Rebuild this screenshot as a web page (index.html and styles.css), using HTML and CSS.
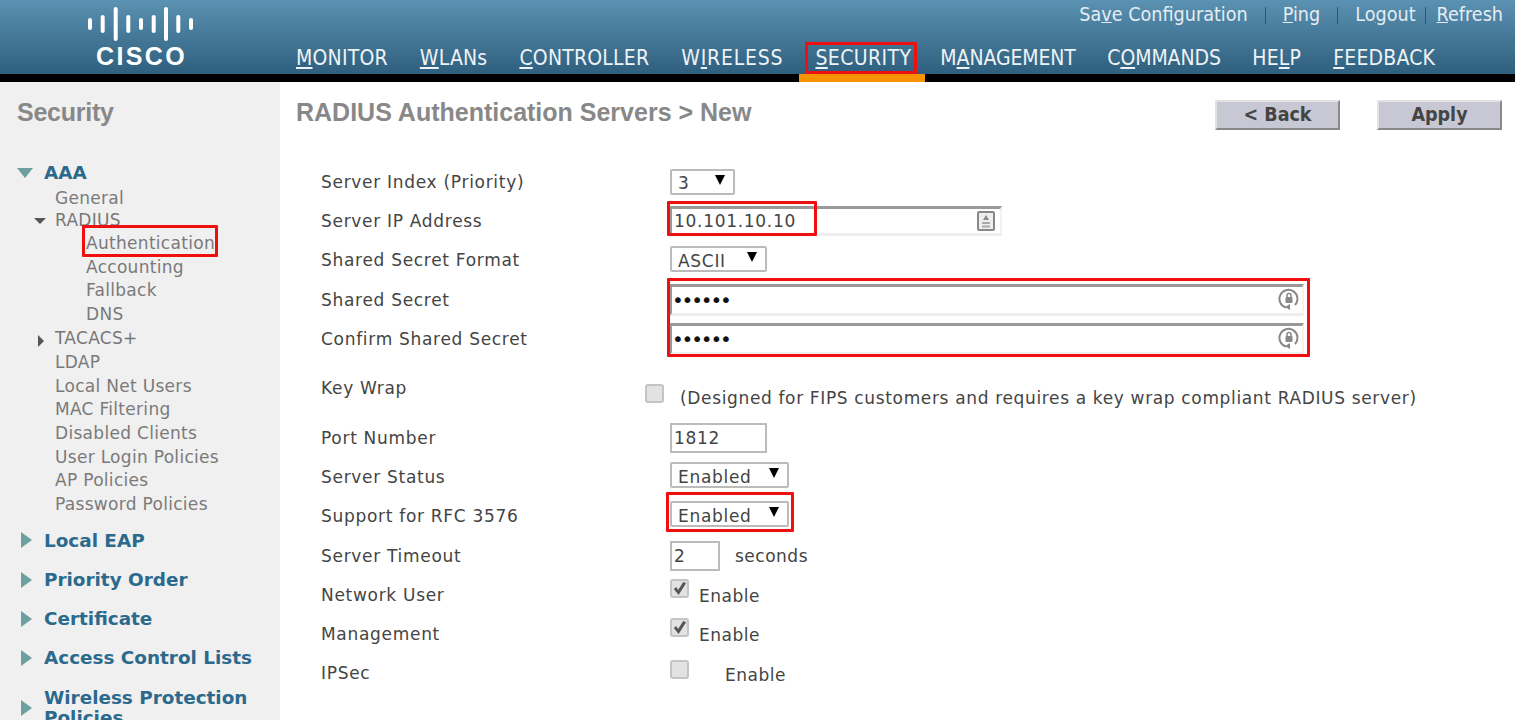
FILE: index.html
```html
<!DOCTYPE html>
<html lang="en">
<head>
    <meta charset="UTF-8">
    <title>RADIUS Authentication Servers &gt; New</title>
    <link rel="stylesheet" href="styles.css">
</head>
<body>
    <header class="topbar">
        <div class="logo">
            <svg class="logo-bars" width="110" height="34" viewBox="0 0 110 34">
                <g stroke="#fff" stroke-width="4" stroke-linecap="round">
                    <line x1="6" y1="13" x2="6" y2="21"/>
                    <line x1="18.7" y1="10" x2="18.7" y2="24"/>
                    <line x1="31.7" y1="2" x2="31.7" y2="32"/>
                    <line x1="44.3" y1="10" x2="44.3" y2="24"/>
                    <line x1="57" y1="13" x2="57" y2="21"/>
                    <line x1="69.7" y1="10" x2="69.7" y2="24"/>
                    <line x1="82" y1="2" x2="82" y2="32"/>
                    <line x1="94.3" y1="10" x2="94.3" y2="24"/>
                    <line x1="107" y1="13" x2="107" y2="21"/>
                </g>
            </svg>
            <div class="logo-text">CISCO</div>
        </div>
        <div class="topbar-right">
            <div class="toplinks">
                <a>Sa<u>v</u>e Configuration</a><i></i>
                <a><u>P</u>ing</a><i></i>
                <a>Lo<u>g</u>out</a><i class="tight"></i>
                <a><u>R</u>efresh</a>
            </div>
            <nav class="nav">
                <a><u>M</u>ONITOR</a>
                <a><u>W</u>LANs</a>
                <a><u>C</u>ONTROLLER</a>
                <a class="wide">W<u>I</u>RELESS</a>
                <a class="active"><u>S</u>ECURITY<span class="mark mark-nav"></span></a>
                <a class="narrow">M<u>A</u>NAGEMENT</a>
                <a class="narrow">C<u>O</u>MMANDS</a>
                <a>HE<u>L</u>P</a>
                <a><u>F</u>EEDBACK</a>
            </nav>
        </div>
    </header>
    <div class="strip"><span class="strip-tab"></span></div>

    <div class="layout">
        <aside class="side">
            <h2 class="side-title">Security</h2>
            <div class="group open">
                <svg class="tri" width="16" height="10" viewBox="0 0 16 10"><path d="M0 0h16L8 10z" fill="#6c9fa0"/></svg>AAA
            </div>
            <ul class="sub">
                <li class="first">General</li>
                <li class="dark"><svg class="tri-sm" width="14" height="8" viewBox="0 0 14 8"><path d="M1 1h12L7 7z" fill="#555"/></svg>RADIUS</li>
                <li class="sub2 auth">Authentication<span class="mark mark-auth"></span></li>
                <li class="sub2">Accounting</li>
                <li class="sub2">Fallback</li>
                <li class="sub2">DNS</li>
                <li class="dark tacacs"><svg class="tri-sm" width="14" height="12" viewBox="0 0 14 12"><path d="M5 0l6 6-6 6z" fill="#555"/></svg>TACACS+</li>
                <li>LDAP</li>
                <li>Local Net Users</li>
                <li>MAC Filtering</li>
                <li>Disabled Clients</li>
                <li>User Login Policies</li>
                <li>AP Policies</li>
                <li>Password Policies</li>
            </ul>
            <div class="group"><svg class="tri" width="11" height="16" viewBox="0 0 11 16"><path d="M0 0l11 8-11 8z" fill="#6c9fa0"/></svg>Local EAP</div>
            <div class="group"><svg class="tri" width="11" height="16" viewBox="0 0 11 16"><path d="M0 0l11 8-11 8z" fill="#6c9fa0"/></svg>Priority Order</div>
            <div class="group"><svg class="tri" width="11" height="16" viewBox="0 0 11 16"><path d="M0 0l11 8-11 8z" fill="#6c9fa0"/></svg>Certificate</div>
            <div class="group"><svg class="tri" width="11" height="16" viewBox="0 0 11 16"><path d="M0 0l11 8-11 8z" fill="#6c9fa0"/></svg>Access Control Lists</div>
            <div class="group group-wrap"><svg class="tri" width="11" height="16" viewBox="0 0 11 16"><path d="M0 0l11 8-11 8z" fill="#6c9fa0"/></svg><span>Wireless Protection Policies</span></div>
        </aside>

        <main class="content">
            <div class="title-row">
                <h1 class="title">RADIUS Authentication Servers &gt; New</h1>
                <div class="buttons">
                    <button class="btn">&lt; Back</button>
                    <button class="btn">Apply</button>
                </div>
            </div>

            <div class="form">
                <div class="row">
                    <label>Server Index (Priority)</label>
                    <div class="ctl"><div class="select w-index"><span>3</span><svg width="12" height="10" viewBox="0 0 12 10"><path d="M1 0h10L6 10z"/></svg></div></div>
                </div>
                <div class="row">
                    <label>Server IP Address</label>
                    <div class="ctl">
                        <span class="mark mark-ip"></span>
                        <div class="field w-ip">
                            <input type="text" value="10.101.10.10">
                            <svg class="field-icon" width="18" height="20" viewBox="0 0 18 20">
                                <rect x="1" y="1" width="16" height="18" rx="1" fill="#eee" stroke="#888" stroke-width="2"/>
                                <path d="M9 4l3 5H6z" fill="#888"/>
                                <path d="M5 11h8v2H5zM5 14.500h8v2H5z" fill="#aaa"/>
                            </svg>
                        </div>
                    </div>
                </div>
                <div class="row">
                    <label>Shared Secret Format</label>
                    <div class="ctl"><div class="select w-ascii"><span>ASCII</span><svg width="12" height="10" viewBox="0 0 12 10"><path d="M1 0h10L6 10z"/></svg></div></div>
                </div>
                <div class="row">
                    <label>Shared Secret</label>
                    <div class="ctl">
                        <span class="mark mark-secret"></span>
                        <div class="field w-secret">
                            <input class="pw" type="password" value="secret">
                            <svg class="field-icon lock" width="22" height="24" viewBox="0 0 22 24">
                                <path d="M8 20.500A9 9 0 1 1 17 18" fill="none" stroke="#888" stroke-width="2"/>
                                <path d="M12 17v6l-5-3z" fill="#888"/>
                                <rect x="7.500" y="10" width="7" height="6" rx="1" fill="#888"/>
                                <path d="M9 10V8.500a2 2 0 0 1 4 0V10" fill="none" stroke="#888" stroke-width="1.500"/>
                            </svg>
                        </div>
                    </div>
                </div>
                <div class="row">
                    <label>Confirm Shared Secret</label>
                    <div class="ctl">
                        <div class="field w-secret">
                            <input class="pw" type="password" value="secret">
                            <svg class="field-icon lock" width="22" height="24" viewBox="0 0 22 24">
                                <path d="M8 20.500A9 9 0 1 1 17 18" fill="none" stroke="#888" stroke-width="2"/>
                                <path d="M12 17v6l-5-3z" fill="#888"/>
                                <rect x="7.500" y="10" width="7" height="6" rx="1" fill="#888"/>
                                <path d="M9 10V8.500a2 2 0 0 1 4 0V10" fill="none" stroke="#888" stroke-width="1.500"/>
                            </svg>
                        </div>
                    </div>
                </div>
                <div class="row row-wrap">
                    <label>Key Wrap</label>
                    <div class="ctl ctl-wrap">
                        <span class="check"></span>
                        <span class="note">(Designed for FIPS customers and requires a key wrap compliant RADIUS server)</span>
                    </div>
                </div>
                <div class="row">
                    <label>Port Number</label>
                    <div class="ctl"><input class="plain w-port" type="text" value="1812"></div>
                </div>
                <div class="row">
                    <label>Server Status</label>
                    <div class="ctl"><div class="select w-enabled"><span>Enabled</span><svg width="12" height="10" viewBox="0 0 12 10"><path d="M1 0h10L6 10z"/></svg></div></div>
                </div>
                <div class="row">
                    <label>Support for RFC 3576</label>
                    <div class="ctl">
                        <span class="mark mark-rfc"></span>
                        <div class="select w-enabled"><span>Enabled</span><svg width="12" height="10" viewBox="0 0 12 10"><path d="M1 0h10L6 10z"/></svg></div>
                    </div>
                </div>
                <div class="row">
                    <label>Server Timeout</label>
                    <div class="ctl"><input class="plain w-timeout" type="text" value="2"><span class="unit">seconds</span></div>
                </div>
                <div class="row">
                    <label>Network User</label>
                    <div class="ctl"><span class="check on"><svg width="15" height="15" viewBox="0 0 16 16"><path d="M2 8.500l2.500-2 2 3L12 1l3 1.500L7 15z" fill="#555"/></svg></span><span class="enable">Enable</span></div>
                </div>
                <div class="row">
                    <label>Management</label>
                    <div class="ctl"><span class="check on"><svg width="15" height="15" viewBox="0 0 16 16"><path d="M2 8.500l2.500-2 2 3L12 1l3 1.500L7 15z" fill="#555"/></svg></span><span class="enable">Enable</span></div>
                </div>
                <div class="row">
                    <label>IPSec</label>
                    <div class="ctl"><span class="check off"></span><span class="enable far">Enable</span></div>
                </div>
            </div>
        </main>
    </div>
</body>
</html>
```

FILE: styles.css
```css
html, body {
    margin: 0;
    height: 720px;
    overflow: hidden;
    background: #fff;
}

body {
    font-family: "DejaVu Sans", sans-serif;
    font-size: 17px;
    letter-spacing: 0.7px;
    color: #444;
}

/* header */
.topbar {
    height: 74px;
    display: flex;
    background: linear-gradient(#5b91b2, #2f5f7e);
    color: #fff;
    letter-spacing: 0;
}

.logo {
    width: 280px;
    padding: 7px 0 0 84px;
    box-sizing: border-box;
}

.logo-bars {
    display: block;
}

.logo-text {
    font-family: "Liberation Sans", sans-serif;
    font-weight: bold;
    font-size: 25px;
    line-height: 26px;
    letter-spacing: 2.400px;
    margin: 2px 0 0 12px;
}

.topbar-right {
    flex: 1;
    display: flex;
    flex-direction: column;
}

.toplinks {
    height: 42px;
    display: flex;
    justify-content: flex-end;
    align-items: flex-start;
    padding: 4px 12px 0 0;
    box-sizing: border-box;
    font-family: "DejaVu Sans Condensed", "DejaVu Sans", sans-serif;
    font-stretch: condensed;
    font-size: 19.600px;
    line-height: 22px;
    color: #e4edf2;
}

.toplinks i {
    width: 1px;
    height: 17px;
    margin: 3px 17px 0;
    background: #2f4f8a;
}

.toplinks i.tight {
    margin: 3px 11px 0 9px;
}

.nav {
    display: flex;
    gap: 32px;
    padding-left: 16px;
    font-family: "DejaVu Sans Condensed", "DejaVu Sans", sans-serif;
    font-stretch: condensed;
    font-size: 21px;
    letter-spacing: 0.2px;
    line-height: 32px;
    color: #eef3f6;
}

.nav a {
    position: relative;
}

.nav .wide {
    letter-spacing: 0.8px;
}

.nav .active {
    letter-spacing: 0.4px;
    margin-right: -3px;
}

.nav .narrow {
    letter-spacing: -0.1px;
    margin-right: -0.5px;
}

.strip {
    height: 8px;
    background: #000;
    position: relative;
}

.strip-tab {
    position: absolute;
    left: 799px;
    top: 0;
    width: 126px;
    height: 8px;
    background: #f79300;
}

/* red highlight boxes drawn over the screenshot */
.mark {
    position: absolute;
    border: 3px solid #f00f0f;
    box-sizing: border-box;
    border-radius: 1px;
    z-index: 2;
    pointer-events: none;
}

.mark-nav {
    left: -10px;
    top: 0;
    width: 112px;
    height: 32px;
}

.mark-auth {
    left: 27px;
    top: -7px;
    width: 136px;
    height: 32px;
}

.mark-ip {
    left: -3px;
    top: -5px;
    width: 150px;
    height: 35px;
}

.mark-secret {
    left: -3px;
    top: -6px;
    width: 643px;
    height: 79px;
}

.mark-rfc {
    left: -4px;
    top: -13px;
    width: 128px;
    height: 40px;
}

/* layout */
.layout {
    display: flex;
    height: 638px;
}

.side {
    width: 280px;
    flex-shrink: 0;
    background: #f0f0f0;
    box-sizing: border-box;
    padding-top: 14px;
    overflow: hidden;
}

.side-title {
    margin: 0 0 32px 17px;
    font-family: "Liberation Sans", sans-serif;
    font-size: 25px;
    line-height: 32px;
    letter-spacing: -0.25px;
    color: #888;
}

.group {
    display: flex;
    align-items: center;
    font-size: 18.400px;
    font-weight: bold;
    line-height: 39.200px;
    letter-spacing: 0;
    color: #2b6a8c;
}

.group .tri {
    flex-shrink: 0;
    margin: 0 12px 0 21px;
}

.group.open .tri {
    margin: 0 11px 0 17px;
}

.group.open {
    line-height: 26px;
}

.group-wrap {
    line-height: 20px;
    padding-top: 10px;
}

.sub {
    list-style: none;
    margin: 1px 0 4.500px;
    padding: 0 0 0 55px;
    font-size: 17px;
    line-height: 23.600px;
    letter-spacing: 0.3px;
    color: #7a7a7a;
}

.sub li {
    position: relative;
    white-space: nowrap;
}

.sub .first {
    margin-bottom: -2px;
}

.sub .tacacs {
    margin-bottom: 1px;
}

.sub .sub2 {
    padding-left: 31px;
}

.sub .dark {
    color: #777;
}

.tri-sm {
    position: absolute;
    left: -22px;
    top: 8px;
}

/* content */
.content {
    flex: 1;
    min-width: 0;
}

.title-row {
    height: 80.500px;
    display: flex;
    justify-content: space-between;
    padding: 14px 13px 0 16px;
    box-sizing: border-box;
    letter-spacing: 0;
}

.title {
    margin: 0;
    font-family: "Liberation Sans", sans-serif;
    font-size: 25px;
    line-height: 32px;
    color: #888;
}

.buttons {
    display: flex;
    gap: 37px;
    padding-top: 4px;
}

.btn {
    width: 125px;
    height: 30px;
    background: #c8c8d4;
    border: 2px solid;
    border-color: #e2e2e2 #888 #888 #e2e2e2;
    font-family: "DejaVu Sans Condensed", "DejaVu Sans", sans-serif;
    font-stretch: condensed;
    font-weight: bold;
    font-size: 19.500px;
    line-height: 20px;
    color: #444;
    padding: 0;
}

.form {
    padding-left: 41px;
}

.row {
    display: flex;
    height: 39.200px;
    align-items: center;
}

.row label {
    width: 349px;
    flex-shrink: 0;
}

.ctl {
    position: relative;
    display: flex;
    align-items: center;
    flex: 1;
}

.row-wrap {
    height: 60px;
}

.ctl-wrap {
    margin-left: -25px;
    padding-top: 20px;
}

.note {
    margin-left: 16px;
    letter-spacing: 0.65px;
}

.select {
    height: 26px;
    margin-top: -4px;
    display: flex;
    align-items: center;
    justify-content: space-between;
    box-sizing: border-box;
    border: 2px solid #bbb;
    border-radius: 2px;
    padding: 3px 7px 0 6px;
    background: #fff;
}

.select svg {
    margin-bottom: 7px;
}

.w-index { width: 65px; margin-top: -1px; }
.w-ascii { width: 97px; margin-top: -2px; }
.w-enabled { width: 119px; }

.field {
    position: relative;
    height: 32px;
    box-sizing: border-box;
    border-style: solid;
    border-width: 3px 2px 3px 2px;
    border-color: #999 #f2f2f2 #eee #999;
    background: #fff;
}

.w-ip { width: 332px; height: 30px; }
.w-secret { width: 634px; }

.field input {
    border: 0;
    outline: 0;
    width: 90%;
    height: 100%;
    padding: 0 0 0 2px;
    font: inherit;
    letter-spacing: inherit;
    color: #444;
    background: transparent;
}

.field .pw {
    font-size: 20px;
    letter-spacing: -2.200px;
    padding-left: 0;
    color: #111;
}

.field-icon {
    position: absolute;
    right: 5px;
    top: 2px;
}

.field-icon.lock {
    right: 2px;
    top: 0;
}

.plain {
    box-sizing: border-box;
    height: 30px;
    border: 2px solid #bbb;
    padding: 0 2px;
    font: inherit;
    letter-spacing: inherit;
    color: #444;
    background: #fff;
}

.w-port { width: 97px; }
.w-timeout { width: 50px; }

.unit {
    margin-left: 15px;
    letter-spacing: 0.5px;
}

.check {
    width: 19px;
    height: 19px;
    box-sizing: border-box;
    border: 2px solid #c4c4c4;
    border-radius: 3px;
    background: #e2e2e2;
    flex-shrink: 0;
    display: flex;
    align-items: center;
    justify-content: center;
    margin-top: -9px;
}

.check.on {
    margin-top: -12px;
}

.check.off {
    margin-top: -8px;
}

.enable {
    margin-left: 10px;
    margin-top: 3px;
    letter-spacing: 0.5px;
}

.enable.far {
    margin-left: 36px;
}
```
